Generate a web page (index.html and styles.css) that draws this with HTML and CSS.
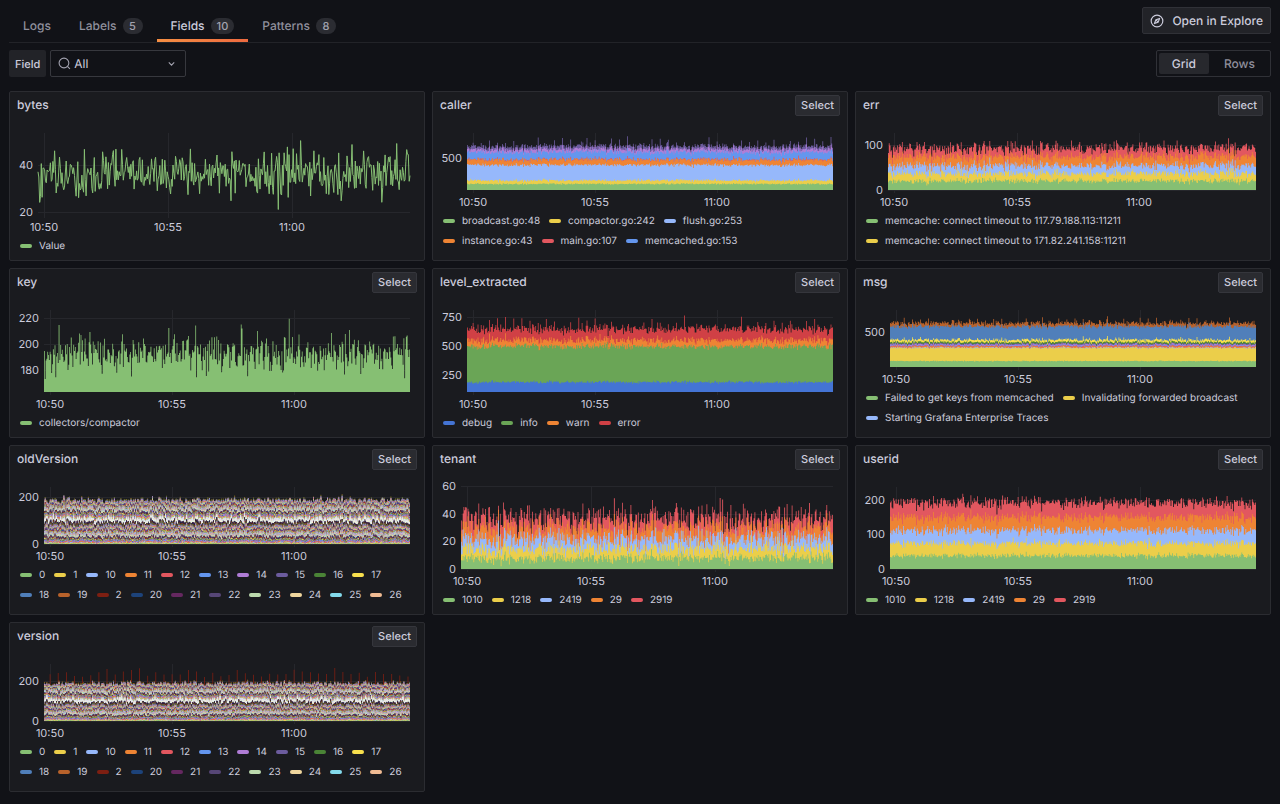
FILE: index.html
```html
<!DOCTYPE html>
<html lang="en">
<head>
<meta charset="utf-8">
<meta name="viewport" content="width=device-width, initial-scale=1">
<title>Fields - Explore Logs</title>
<link rel="stylesheet" href="styles.css">
</head>
<body>
<header class="topbar">
  <nav class="tabs" aria-label="Breakdown">
    <a class="tab" href="#logs">Logs</a>
    <a class="tab" href="#labels">Labels <span class="badge">5</span></a>
    <a class="tab tab-active" href="#fields" aria-current="page">Fields <span class="badge">10</span></a>
    <a class="tab" href="#patterns">Patterns <span class="badge">8</span></a>
  </nav>
  <button class="explore" type="button">
    <svg class="explore-icon" viewBox="0 0 24 24" aria-hidden="true">
      <circle cx="12" cy="12" r="10"/>
      <path d="M16.4 7.6 L14 14 L7.6 16.4 L10 10 Z"/>
      <path d="M10 10 L14 14"/>
    </svg>
    Open in Explore
  </button>
</header>

<div class="controls">
  <div class="field">
    <label class="field-label" for="field-select">Field</label>
    <div class="select-wrap">
      <svg class="search-icon" viewBox="0 0 24 24" aria-hidden="true"><circle cx="11" cy="11" r="9"/><path d="M17.5 17.5 L22 22"/></svg>
      <select class="select" id="field-select">
        <option>All</option><option>bytes</option><option>caller</option><option>err</option><option>key</option>
      </select>
      <svg class="chevron" viewBox="0 0 12 12" aria-hidden="true"><path d="M3.5 5 L6 7.5 L8.500 5"/></svg>
    </div>
  </div>
  <div class="switch" role="radiogroup" aria-label="Layout">
    <input class="switch-input" type="radio" name="layout" id="layout-grid" checked>
    <label class="switch-label" for="layout-grid">Grid</label>
    <input class="switch-input" type="radio" name="layout" id="layout-rows">
    <label class="switch-label" for="layout-rows">Rows</label>
  </div>
</div>

<main class="panels" id="panels"></main>
<script src="charts.js"></script>
</body>
</html>
```
FILE: styles.css
```css
* {
  box-sizing: border-box;
}

body {
  margin: 0;
  padding: 0 9px 12px;
  background: #111217;
  color: #ccccdc;
  font-family: Inter, "Liberation Sans", sans-serif;
  font-size: 12px;
  line-height: 16px;
  text-rendering: geometricPrecision;
}

button,
select {
  font: inherit;
  color: inherit;
  text-rendering: inherit;
}

.topbar {
  display: flex;
  justify-content: space-between;
  align-items: flex-start;
  border-bottom: 1px solid #222328;
}

.tabs {
  display: flex;
  padding-top: 12px;
}

.tab {
  display: flex;
  align-items: center;
  gap: 6px;
  height: 30px;
  padding: 0 14px;
  color: #8f8f9c;
  font-weight: 500;
  text-decoration: none;
  border-bottom: 3px solid transparent;
}

.tab-active {
  color: #ccccdc;
  border-image: linear-gradient(90deg, #f58f43, #ee6a40) 1;
  border-image-width: 0 0 3px 0;
}

.badge {
  min-width: 20px;
  padding: 0 6px;
  border-radius: 8px;
  background: #2b2c32;
  color: #a3a3b0;
  font-size: 11px;
  text-align: center;
}

.explore {
  display: flex;
  align-items: center;
  gap: 8px;
  height: 27px;
  margin-top: 7px;
  padding: 0 7px;
  background: #222328;
  border: 1px solid #303137;
  border-radius: 2px;
  font-weight: 500;
}

.explore-icon {
  width: 14px;
  height: 14px;
  fill: none;
  stroke: #ccccdc;
  stroke-width: 2;
  stroke-linejoin: round;
}

.controls {
  display: flex;
  justify-content: space-between;
  padding: 7px 0 14px;
}

.field {
  display: flex;
  gap: 4px;
}

.field-label {
  display: flex;
  align-items: center;
  padding: 0 6px;
  background: #222328;
  border-radius: 2px;
  font-size: 11px;
  font-weight: 500;
}

.select-wrap {
  position: relative;
}

.select {
  width: 136px;
  height: 27px;
  padding: 0 23px;
  background: #111217;
  border: 1px solid #37383e;
  border-radius: 2px;
  appearance: none;
}

.search-icon,
.chevron {
  position: absolute;
  top: 7px;
  width: 13px;
  height: 13px;
  fill: none;
  stroke: #a3a3b0;
  pointer-events: none;
}

.search-icon {
  left: 8px;
  stroke-width: 2;
}

.chevron {
  right: 8px;
}

.switch {
  display: flex;
  gap: 2px;
  height: 27px;
  padding: 2px;
  border: 1px solid #303137;
  border-radius: 2px;
}

.switch-input {
  position: absolute;
  opacity: 0;
}

.switch-label {
  display: flex;
  align-items: center;
  padding: 0 13px;
  border-radius: 2px;
  color: #8f8f9c;
  font-weight: 500;
}

.switch-input:checked + .switch-label {
  background: #27282d;
  color: #ccccdc;
}

.panels {
  display: grid;
  grid-template-columns: repeat(3, minmax(0, 1fr));
  gap: 7px;
}

.panel {
  display: flex;
  flex-direction: column;
  min-height: 170px;
  background: #1a1b1f;
  border: 1px solid #2b2c31;
  border-radius: 2px;
}

.panel-head {
  display: flex;
  justify-content: space-between;
  align-items: center;
  height: 27px;
  padding: 0 7px;
}

.panel-title {
  margin: 0;
  padding-bottom: 1px;
  font-size: 12px;
  font-weight: 500;
}

.panel-select {
  height: 21px;
  padding: 0 5px 1px;
  background: #2a2b30;
  border: 1px solid #35363c;
  border-radius: 2px;
  font-size: 11px;
  font-weight: 500;
  line-height: 16px;
}

.chart {
  display: block;
  width: 100%;
  height: 116px;
}

.chart-short {
  height: 91px;
}

.grid-line {
  stroke: #26272c;
  stroke-width: 1;
  shape-rendering: crispEdges;
}

.axis-text {
  fill: #ccccdc;
  font-size: 11px;
}

.legend {
  display: flex;
  flex-wrap: wrap;
  column-gap: 9px;
  margin: 0;
  padding: 1px 7px 0 10px;
  list-style: none;
  font-size: 10px;
  line-height: 20px;
}

.legend-item {
  display: flex;
  align-items: center;
  gap: 7px;
}

.swatch {
  width: 12px;
  height: 4px;
  border-radius: 2px;
}
```
FILE: charts.js
```javascript
const PALETTE = ('#86bf73 #ebce4a #96b8fb #ee8434 #e2575f #6496ee #b07dd6 #6c5c9e #4a8436 #f7df4d ' +
  '#507fba #b8622b #7d1f12 #1d437a #652860 #564676 #bcdaae #efd69d #83daeb #f0bb93 #e39592 #8ab4d6 #dbaade #aca3dd ' +
  '#6a9d57 #dead35 #73aec6 #d57839 #af2b17 #1f509e #883780 #5f4e91 #a0c38e #ebca75 #77c4d9 #ee9658 #db6b64 #5e94ca #cc87cb #7d6fb4 ' +
  '#466736 #8f7322 #33565d #8e4920 #501b13 #112b4f #4a1d47 #3c2d59 #e3f8da #f9ebcd #d5f9fe #f5e3d4 #f8e3df #c0dff2 #f3daf7 #dedaf5').split(' ');

const series = (...rows) => rows.map(([mean, dev, color, pulse]) => ({ mean, dev, color, pulse: pulse || 0 }));
const P = PALETTE;

function versionSeries(extra) {
  const list = [];
  for (let i = 0; i < 98; i++) list.push({ mean: 1.85, dev: 1.8, color: P[i % P.length], pulse: 0, pull: 0.025 });
  if (extra) list.push({ mean: 0, dev: 0, color: '#7d1f12', pulse: 45 });
  return list;
}

const versionLegend = '0 1 10 11 12 13 14 15 16 17 18 19 2 20 21 22 23 24 25 26'.split(' ').map((n, i) => [n, P[i]]);
const idLegend = ['1010', '1218', '2419', '29', '2919'].map((n, i) => [n, P[i]]);

/* ticks: value and its height in pixels from the top of the chart; base: height of the plot's floor */
const PANELS = [
  { name: 'bytes', line: true, left: 28, ticks: [[40, 46], [20, 93]], base: 96,
    data: series([36, 4.9, P[0]]), legend: [['Value', P[0]]] },
  { name: 'caller', short: true, left: 34, ticks: [[500, 39]], zero: 71, base: 71,
    data: series([95, 6, P[0]], [54, 8, P[1]], [240, 8, P[2]], [80, 10, P[3]], [4, 6, P[4], 24], [112, 8, P[5]], [44, 8, P[6], 20], [46, 14, P[7], 56]),
    legend: [['broadcast.go:48', P[0]], ['compactor.go:242', P[1]], ['flush.go:253', P[2]], ['instance.go:43', P[3]], ['main.go:107', P[4]], ['memcached.go:153', P[5]]] },
  { name: 'err', short: true, left: 32, ticks: [[100, 26], [0, 71]], base: 71,
    data: series([20, 3, P[0]], [17, 3, P[1]], [17, 3, P[2]], [20, 3, P[3]], [19, 3.4, P[4]]),
    legend: [['memcache: connect timeout to 117.79.188.113:11211', P[0]], ['memcache: connect timeout to 171.82.241.158:11211', P[1]]] },
  { name: 'key', left: 34, ticks: [[220, 22], [200, 48], [180, 74]], base: 96,
    data: series([192, 7.5, P[0]]), legend: [['collectors/compactor', P[0]]] },
  { name: 'level_extracted', left: 34, ticks: [[750, 21], [500, 50], [250, 79]], base: 96,
    data: series([188, 6, '#4474d4'], [308, 11, '#6aa556'], [54, 10, '#ee8434', 20], [94, 12, '#d04045', 50]),
    legend: [['debug', '#4474d4'], ['info', '#6aa556'], ['warn', '#ee8434'], ['error', '#d04045']] },
  { name: 'msg', short: true, left: 34, ticks: [[500, 36]], zero: 71, base: 71,
    data: series([85, 3, P[0]], [185, 6, P[1]], [6, 3, P[2]], [14, 4, P[3]], [10, 3, P[4]], [8, 3, P[5]], [14, 3, P[6]], [10, 3, P[7]], [22, 3, P[8]], [32, 5, P[9], 26], [190, 8, P[10]], [46, 12, P[11], 40]),
    legend: [['Failed to get keys from memcached', P[0]], ['Invalidating forwarded broadcast', P[1]], ['Starting Grafana Enterprise Traces', P[2]]] },
  { name: 'oldVersion', short: true, left: 34, ticks: [[200, 24], [0, 71]], base: 71, data: versionSeries(false), legend: versionLegend },
  { name: 'tenant', left: 28, ticks: [[60, 13], [40, 41], [20, 68], [0, 96]], base: 96,
    data: series([7.8, 2, P[0]], [7, 2.2, P[1]], [7, 2.3, P[2]], [7.5, 2.5, P[3]], [7.6, 3, P[4]]), legend: idLegend },
  { name: 'userid', left: 34, ticks: [[200, 27], [100, 61], [0, 96]], base: 96,
    data: series([38, 4, P[0]], [36, 4, P[1]], [37, 4, P[2]], [38, 4, P[3]], [42, 5, P[4]]), legend: idLegend },
  { name: 'version', short: true, left: 34, ticks: [[200, 31], [0, 71]], base: 71, data: versionSeries(true), legend: versionLegend }
];

const SAMPLES = 450;
const SVG_NS = 'http://www.w3.org/2000/svg';

function randomSource(seed) {
  let s = seed >>> 0;
  return () => {
    s = (s + 0x6d2b79f5) | 0;
    let t = Math.imul(s ^ (s >>> 15), 1 | s);
    t = (t + Math.imul(t ^ (t >>> 7), 61 | t)) ^ t;
    return ((t ^ (t >>> 14)) >>> 0) / 4294967296;
  };
}

function svgNode(parent, tag, attrs, text) {
  const node = document.createElementNS(SVG_NS, tag);
  for (const key in attrs) node.setAttribute(key, attrs[key]);
  if (text !== undefined) node.textContent = text;
  parent.appendChild(node);
  return node;
}

function htmlNode(parent, tag, className, text) {
  const node = document.createElement(tag);
  if (className) node.className = className;
  if (text !== undefined) node.textContent = text;
  parent.appendChild(node);
  return node;
}

/* running totals, one row for each series */
function stack(panel, seed) {
  const rand = randomSource(seed);
  const normal = () => rand() + rand() + rand() + rand() + rand() + rand() - 3;
  const total = new Array(SAMPLES).fill(0);
  let expected = 0;
  return panel.data.map(s => {
    const low = s.mean ? 0 : 0.7;
    for (let i = 0; i < SAMPLES; i++) {
      let v = s.mean + normal() * 1.42 * s.dev;
      if (s.pull) v += (expected - total[i]) * s.pull;
      else if (rand() < 0.02) v += s.dev * 1.6;
      if (s.pulse && i % 10 === 7) v += s.pulse * (low + rand() * (1.5 - low));
      total[i] += Math.max(0, v);
    }
    expected += s.mean;
    return total.slice();
  });
}

function draw(svg, panel, seed) {
  svg.replaceChildren();
  const width = svg.clientWidth;
  const right = width - 14;
  const span = right - panel.left;
  const top = 14;
  const floor = panel.base;
  const first = panel.ticks[0];
  const last = panel.ticks.length > 1 ? panel.ticks[panel.ticks.length - 1] : [0, panel.zero];
  const scale = (last[1] - first[1]) / (first[0] - last[0]);
  const y = v => Math.min(floor, last[1] - (v - last[0]) * scale);

  for (const [value, pos] of panel.ticks) {
    svgNode(svg, 'line', { class: 'grid-line', x1: panel.left, x2: right, y1: pos, y2: pos });
    svgNode(svg, 'text', { class: 'axis-text', x: panel.left - 5, y: pos + 4, 'text-anchor': 'end' }, value);
  }
  ['10:50', '10:55', '11:00'].forEach((label, i) => {
    const x = Math.floor(panel.left + span * (0.018 + i / 3));
    svgNode(svg, 'line', { class: 'grid-line', x1: x, x2: x, y1: top, y2: floor + 3 });
    svgNode(svg, 'text', { class: 'axis-text', x, y: floor + 16, 'text-anchor': 'middle' }, label);
  });

  const rows = stack(panel, seed);
  const step = span / SAMPLES;
  for (let k = rows.length - 1; k >= 0; k--) {
    const color = panel.data[k].color;
    let d = '';
    if (panel.line) {
      rows[k].forEach((v, i) => { d += (i ? 'L' : 'M') + (panel.left + i * span / (SAMPLES - 1)).toFixed(1) + ' ' + y(v).toFixed(1); });
      svgNode(svg, 'path', { d, fill: 'none', stroke: color, 'stroke-width': 1 });
    } else {
      d = 'M' + panel.left + ' ' + floor;
      rows[k].forEach((v, i) => { d += 'V' + y(v).toFixed(1) + 'H' + (panel.left + (i + 1) * step).toFixed(1); });
      svgNode(svg, 'path', { d: d + 'V' + floor + 'Z', fill: color });
    }
  }
}

const root = document.getElementById('panels');
const charts = PANELS.map((panel, index) => {
  const box = htmlNode(root, 'section', 'panel');
  const head = htmlNode(box, 'div', 'panel-head');
  htmlNode(head, 'h2', 'panel-title', panel.name);
  if (panel.name !== 'bytes') htmlNode(head, 'button', 'panel-select', 'Select').type = 'button';
  const svg = svgNode(box, 'svg', { class: panel.short ? 'chart chart-short' : 'chart', role: 'img', 'aria-label': panel.name });
  const legend = htmlNode(box, 'ul', 'legend');
  for (const [name, color] of panel.legend) {
    const item = htmlNode(legend, 'li', 'legend-item');
    htmlNode(item, 'span', 'swatch').style.background = color;
    htmlNode(item, 'span', '', name);
  }
  return () => draw(svg, panel, 101 + index * 37);
});

const drawAll = () => charts.forEach(paint => paint());
drawAll();
window.addEventListener('resize', drawAll);
```
